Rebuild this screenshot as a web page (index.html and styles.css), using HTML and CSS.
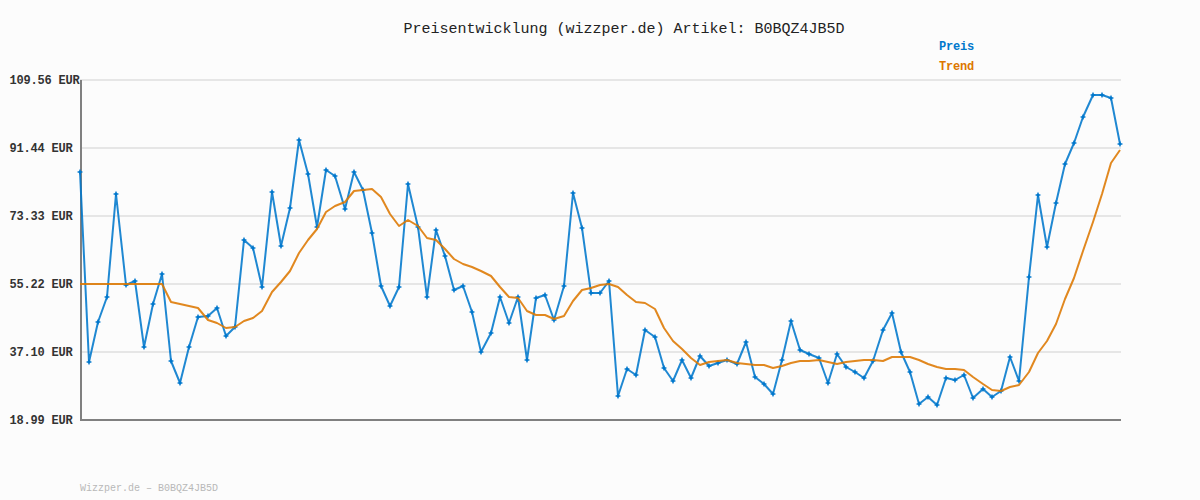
FILE: index.html
```html
<!DOCTYPE html>
<html lang="de">
<head>
<meta charset="utf-8">
<title>Preisentwicklung</title>
<link rel="stylesheet" href="styles.css">
</head>
<body>
<svg class="chart" width="1200" height="500" viewBox="0 0 1200 500" xmlns="http://www.w3.org/2000/svg">
  <defs>
    <marker id="pt" markerUnits="userSpaceOnUse" markerWidth="8" markerHeight="8" refX="4" refY="4">
      <path class="pt-shape" d="M4 0.8L5 3L7.2 4L5 5L4 7.2L3 5L0.8 4L3 3z"/>
    </marker>
  </defs>
  <text class="title" x="403.5" y="33">Preisentwicklung (wizzper.de) Artikel: B0BQZ4JB5D</text>
  <text class="legend preis" x="939" y="50">Preis</text>
  <text class="legend trend" x="939" y="70">Trend</text>
  <path class="grid" d="M80 80H1121M80 148H1121M80 216H1121M80 284H1121M80 352H1121"/>
  <path class="axis" d="M81 80V420H1121"/>
  <text class="ylabel" x="9.5" y="84">109.56 EUR</text>
  <text class="ylabel" x="9.5" y="152">91.44 EUR</text>
  <text class="ylabel" x="9.5" y="220">73.33 EUR</text>
  <text class="ylabel" x="9.5" y="288">55.22 EUR</text>
  <text class="ylabel" x="9.5" y="356">37.10 EUR</text>
  <text class="ylabel" x="9.5" y="424">18.99 EUR</text>
  <polyline class="price" points="80,172 89,362 98,322 107,297 116,194 126,285 135,281 144,347 153,304 162,274 171,361 180,383 189,347 198,317 208,316 217,308 226,336 235,327 244,240 253,248 262,287 272,192 281,246 290,208 299,140 308,174 317,227 326,170 335,176 345,209 354,172 363,190 372,233 381,286 390,306 399,287 408,184 418,227 427,297 436,230 445,256 454,290 463,286 472,312 481,352 491,333 500,297 509,323 518,297 527,360 536,298 545,295 554,320 564,286 573,193 582,228 591,293 600,293 609,281 618,396 627,369 636,375 645,330 655,337 664,368 673,381 682,360 691,378 700,356 709,366 718,363 727,360 737,364 746,342 755,377 764,384 773,394 782,360 791,321 800,350 809,354 819,358 828,383 837,354 846,367 855,372 864,378 873,361 883,330 892,313 901,352 910,372 919,404 928,397 937,405 946,378 955,380 964,375 973,398 983,389 992,397 1001,391 1010,357 1019,381 1029,277 1038,195 1047,247 1056,203 1065,164 1074,143 1083,117 1093,95 1102,95 1111,98 1120,144"/>
  <polyline class="trendline" points="80,284 162,284 171,302 180,304 189,306 198,308 208,320 217,323 226,328 235,327 244,321 253,318 262,311 272,292 281,282 290,271 299,253 308,240 317,229 326,212 335,206 345,202 354,191 363,190 372,189 381,197 390,214 399,226 408,220 418,226 427,238 436,240 445,249 454,259 463,264 472,267 481,271 491,276 500,287 509,297 518,298 527,311 536,315 545,315 554,319 564,316 573,301 582,290 591,288 600,285 609,284 618,287 627,295 636,302 645,303 655,309 664,328 673,341 682,349 691,358 700,365 709,362 718,361 727,360 737,363 746,364 755,365 764,365 773,368 782,366 791,363 800,361 809,361 819,360 828,362 837,364 846,362 855,361 864,360 873,360 883,361 892,357 901,357 910,357 919,360 928,364 937,367 946,369 955,369 964,370 973,377 983,384 992,390 1001,391 1010,387 1019,385 1029,372 1038,353 1047,341 1056,324 1065,299 1074,278 1083,251 1093,222 1102,194 1111,163 1120,150"/>
  <text class="footer" x="80" y="491">Wizzper.de – B0BQZ4JB5D</text>
</svg>
</body>
</html>
```
FILE: styles.css
```css
html, body {
  margin: 0;
  padding: 0;
  background: #fcfcfc;
}
.chart {
  display: block;
}
.chart text {
  font-family: "Liberation Mono", "DejaVu Sans Mono", monospace;
}
.title {
  font-size: 15px;
  fill: #222222;
}
.legend {
  font-size: 12px;
  letter-spacing: -0.2px;
  font-weight: bold;
}
.preis { fill: #0077cc; }
.trend { fill: #dd7700; }
.ylabel {
  font-size: 12px;
  letter-spacing: -0.2px;
  font-weight: bold;
  fill: #333333;
}
.footer {
  font-size: 10px;
  fill: #b8b8b8;
}
.grid {
  fill: none;
  stroke: #e6e6e6;
  stroke-width: 2;
}
.axis {
  fill: none;
  stroke: #808080;
  stroke-width: 2;
}
.price {
  fill: none;
  stroke: #0077cc;
  stroke-opacity: 0.88;
  stroke-width: 2;
  stroke-linejoin: round;
  marker-start: url(#pt);
  marker-mid: url(#pt);
  marker-end: url(#pt);
}
.pt-shape {
  fill: #0077cc;
}
.trendline {
  fill: none;
  stroke: #dd7700;
  stroke-opacity: 0.88;
  stroke-width: 2;
  stroke-linejoin: round;
}
```
